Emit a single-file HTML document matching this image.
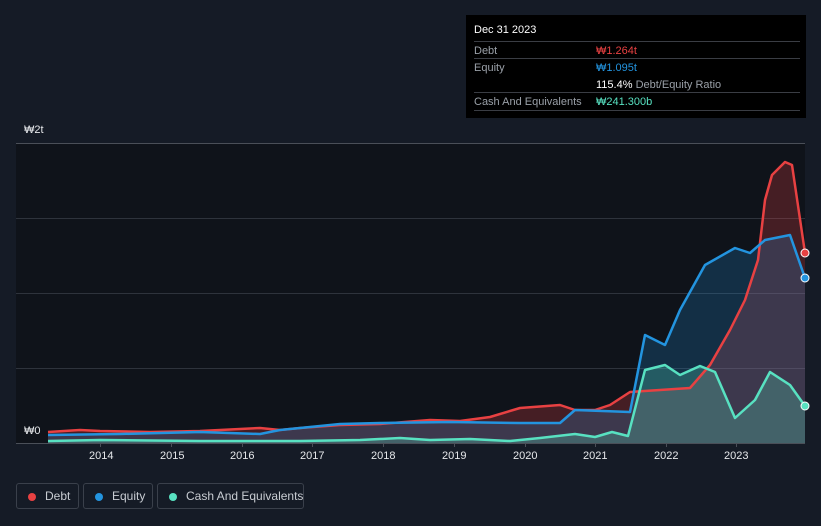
<!DOCTYPE html>
<html><head><meta charset="utf-8"><style>
body{margin:0;width:821px;height:526px;background:#151b26;font-family:"Liberation Sans","Noto Sans CJK KR",sans-serif;overflow:hidden;position:relative}
.tt{position:absolute;left:466px;top:15px;width:340px;height:103px;background:#000;color:#fff;font-size:11px}
.row{position:absolute;left:8px;width:326px;border-top:1px solid #3a3d44;height:18px;line-height:18px;color:#9aa0a8}
.row span{position:absolute;left:122px}
.lg{position:absolute;top:483px;height:26px;border:1px solid #3a404b;border-radius:3px;color:#c8ccd2;font-size:12px;line-height:24px;box-sizing:border-box;white-space:nowrap}
.lg i{position:absolute;left:11px;top:9px;width:8px;height:8px;border-radius:50%}
.lg b{font-weight:normal;position:absolute;left:28px;white-space:nowrap}
.ax{position:absolute;color:#e6e8eb;font-size:11px}
</style></head><body>
<svg width="821" height="526" style="position:absolute;left:0;top:0">
<rect x="16" y="143" width="789" height="300" fill="#0f131a"/>
<g stroke="#2e333c" stroke-width="1"><line x1="16" y1="143.5" x2="805" y2="143.5" stroke="#4a4f58"/><line x1="16" y1="218.5" x2="805" y2="218.5"/><line x1="16" y1="293.5" x2="805" y2="293.5"/><line x1="16" y1="368.5" x2="805" y2="368.5"/><line x1="16" y1="443.5" x2="805" y2="443.5" stroke="#4a4f58"/></g>
<g stroke="#4a4f58"><line x1="100.5" y1="443" x2="100.5" y2="447"/><line x1="171.5" y1="443" x2="171.5" y2="447"/><line x1="242.5" y1="443" x2="242.5" y2="447"/><line x1="312.5" y1="443" x2="312.5" y2="447"/><line x1="383.5" y1="443" x2="383.5" y2="447"/><line x1="454.5" y1="443" x2="454.5" y2="447"/><line x1="525.5" y1="443" x2="525.5" y2="447"/><line x1="595.5" y1="443" x2="595.5" y2="447"/><line x1="666.5" y1="443" x2="666.5" y2="447"/><line x1="736.5" y1="443" x2="736.5" y2="447"/></g>
<polygon fill="#e84142" fill-opacity="0.25" points="48,443 48,432 80,430 100,431 150,432 200,431 240,429 260,428 280,430 300,428 340,425 380,424 430,420 460,421 490,417 520,408 560,405 575,410 595,410 610,405 630,392 660,390 690,388 710,365 730,330 745,300 758,260 765,200 772,175 785,162 792,165 805,253 805,443"/>
<polygon fill="#2394df" fill-opacity="0.22" points="48,443 48,435 120,434 200,432 260,434 280,430 340,424 380,423 450,422 520,423 560,423 575,410 630,412 645,335 665,345 680,310 705,265 735,248 750,253 765,240 790,235 805,278 805,443"/>
<polygon fill="#58e1c1" fill-opacity="0.25" points="48,443 48,441 100,440 200,441 300,441 360,440 400,438 430,440 470,439 510,441 540,438 575,434 595,437 612,432 628,436 645,370 665,365 680,375 700,366 715,372 735,418 755,400 770,372 790,385 805,406 805,443"/>
<g fill="none" stroke-width="2.5" stroke-linejoin="round">
<polyline stroke="#e84142" points="48,432 80,430 100,431 150,432 200,431 240,429 260,428 280,430 300,428 340,425 380,424 430,420 460,421 490,417 520,408 560,405 575,410 595,410 610,405 630,392 660,390 690,388 710,365 730,330 745,300 758,260 765,200 772,175 785,162 792,165 805,253"/>
<polyline stroke="#2394df" points="48,435 120,434 200,432 260,434 280,430 340,424 380,423 450,422 520,423 560,423 575,410 630,412 645,335 665,345 680,310 705,265 735,248 750,253 765,240 790,235 805,278"/>
<polyline stroke="#58e1c1" points="48,441 100,440 200,441 300,441 360,440 400,438 430,440 470,439 510,441 540,438 575,434 595,437 612,432 628,436 645,370 665,365 680,375 700,366 715,372 735,418 755,400 770,372 790,385 805,406"/>
</g>
<circle cx="805" cy="253" r="4" fill="#e84142" stroke="#fff" stroke-width="1"/>
<circle cx="805" cy="278" r="4" fill="#2394df" stroke="#fff" stroke-width="1"/>
<circle cx="805" cy="406" r="4" fill="#58e1c1" stroke="#fff" stroke-width="1"/>
</svg>
<div class="ax" style="left:24px;top:124px">₩2t</div>
<div class="ax" style="left:24px;top:425px">₩0</div>
<div class="ax" style="left:89px;top:450px">2014</div><div class="ax" style="left:160px;top:450px">2015</div><div class="ax" style="left:230px;top:450px">2016</div><div class="ax" style="left:300px;top:450px">2017</div><div class="ax" style="left:371px;top:450px">2018</div><div class="ax" style="left:442px;top:450px">2019</div><div class="ax" style="left:513px;top:450px">2020</div><div class="ax" style="left:583px;top:450px">2021</div><div class="ax" style="left:654px;top:450px">2022</div><div class="ax" style="left:724px;top:450px">2023</div>
<div class="tt">
<div style="position:absolute;left:8px;top:9px">Dec 31 2023</div>
<div class="row" style="top:26px">Debt<span style="color:#e84142">₩1.264t</span></div>
<div class="row" style="top:43px">Equity<span style="color:#2394df">₩1.095t</span></div>
<div class="row" style="top:61px;border-top:none"><span style="color:#fff">115.4% <span style="position:static;color:#9aa0a8">Debt/Equity Ratio</span></span></div>
<div class="row" style="top:77px">Cash And Equivalents<span style="color:#58e1c1">₩241.300b</span></div>
<div class="row" style="top:95px;height:0"></div>
</div>
<div class="lg" style="left:16px;width:63px"><i style="background:#e84142"></i><b>Debt</b></div>
<div class="lg" style="left:83px;width:70px"><i style="background:#2394df"></i><b>Equity</b></div>
<div class="lg" style="left:157px;width:147px"><i style="background:#58e1c1"></i><b>Cash And Equivalents</b></div>
</body></html>
